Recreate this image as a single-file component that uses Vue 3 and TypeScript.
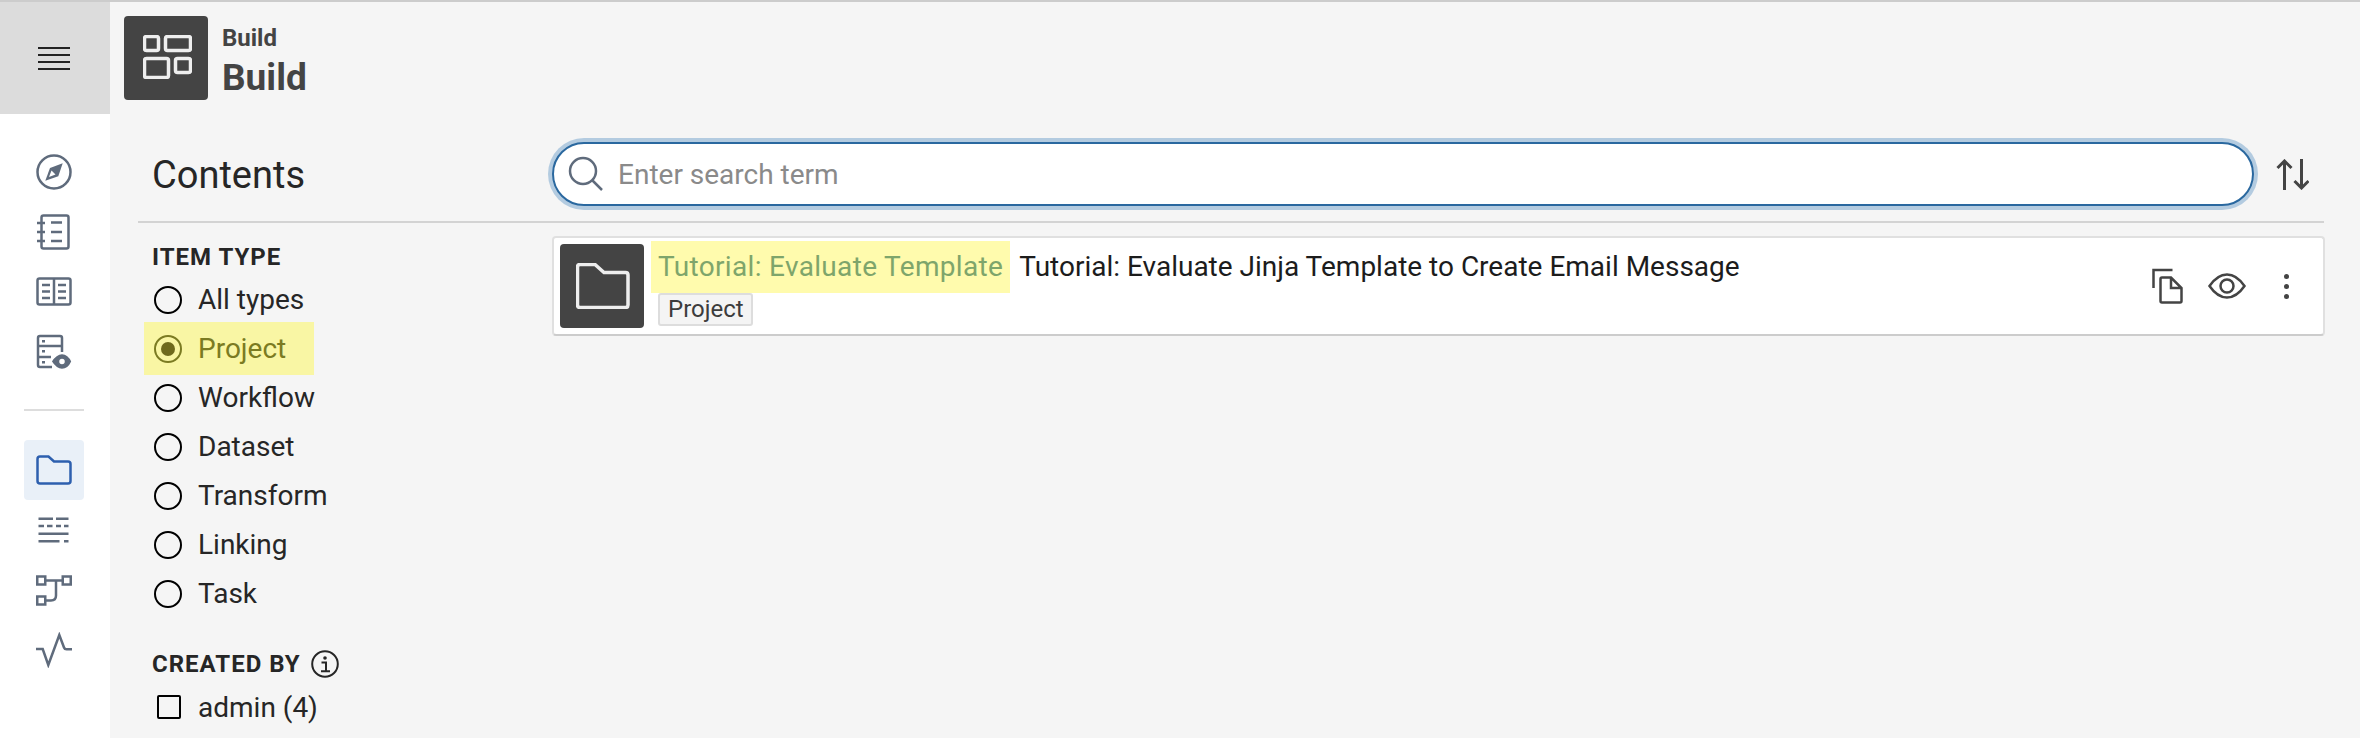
<script setup lang="ts">
const railTop = ["compass", "notebook", "book", "server"];
const types = ["All types", "Project", "Workflow", "Dataset", "Transform", "Linking", "Task"];
const selected = "Project";
</script>

<template>
  <div class="app">
    <nav class="rail">
      <button class="menu" aria-label="Menu">
        <span></span><span></span><span></span><span></span>
      </button>
      <div class="rail-group first">
        <div v-for="name in railTop" :key="name" class="rail-item">
          <svg v-if="name === 'compass'" viewBox="0 0 36 36" class="ri">
            <circle cx="18" cy="18" r="16.500" />
            <path class="needle" d="M26.700 9.300 L22.300 22.300 L9.300 26.700 L14 14 Z" />
            <path class="cut" d="M13 23 L15.500 16.500 L19.500 20.500 Z" />
          </svg>
          <svg v-else-if="name === 'notebook'" viewBox="0 0 36 36" class="ri">
            <rect x="5.500" y="1.500" width="27" height="33" rx="2" />
            <path d="M1 9h8M1 18h8M1 27h8M15 8.500h11M15 18h11M15 27h11" />
          </svg>
          <svg v-else-if="name === 'book'" viewBox="0 0 36 36" class="ri">
            <rect x="1.500" y="4.500" width="33" height="26" rx="2" />
            <path d="M18 4.500v26M6 11h8M6 17.500h8M6 24h8M22 11h8M22 17.500h8M22 24h8" />
          </svg>
          <svg v-else viewBox="0 0 36 36" class="ri">
            <path d="M16 33H4q-2 0-2-2V4q0-2 2-2h20q2 0 2 2v14M2 12h24M2 23h13" />
            <path class="dot" d="M6 6h3v2.500H6zM6 16h3v2.500H6zM6 27h3v2.500H6z" />
            <path class="solid" d="M15 27.500c3.500-5.500 7.500-8 11-8s7.500 2.500 10 8c-2.500 5.500-6.500 8-10 8s-7.500-2.500-11-8z" />
            <circle class="hole" cx="26" cy="27.500" r="3.500" />
          </svg>
        </div>
      </div>
      <div class="rail-sep"></div>
      <div class="rail-group">
        <div class="rail-item active">
          <svg viewBox="0 0 36 30" class="ri folder">
            <path d="M1.500 4q0-2.500 2.500-2.500h8.500L18 6.500h14q2.500 0 2.500 2.500v17q0 2.500-2.500 2.500H4q-2.500 0-2.500-2.500z" />
          </svg>
        </div>
        <div class="rail-item">
          <svg viewBox="0 0 36 36" class="ri">
            <path d="M2.500 6.700h14.500M20 6.700h12.500M2.500 14h5.500M11 14h5.500M20 14h5M28 14h4.500M2.500 21.700h30M2.500 29.300h21M28 29.300h4.500" />
          </svg>
        </div>
        <div class="rail-item">
          <svg viewBox="0 0 36 36" class="ri">
            <rect x="1.250" y="4.500" width="8" height="8" />
            <rect x="26.750" y="4.500" width="8" height="8" />
            <rect x="1.250" y="24.500" width="8" height="8" />
            <path d="M9.250 8.500h17.500M20 8.500v15q0 5-5 5H9.250" />
          </svg>
        </div>
        <div class="rail-item">
          <svg viewBox="0 0 36 36" class="ri">
            <path d="M0 17h6.700l5.600 16L23.300 3l4.700 12.500q.6 1.800 2.500 1.800H36" />
          </svg>
        </div>
      </div>
    </nav>

    <main class="main">
      <header class="head">
        <div class="logo">
          <svg viewBox="0 0 49 44" width="49" height="44">
            <rect x="1.500" y="1.500" width="14" height="14" rx="2" />
            <rect x="22.500" y="1.500" width="25" height="14" rx="2" />
            <rect x="1.500" y="23.500" width="24" height="19" rx="2" />
            <rect x="32.500" y="23.500" width="15" height="14" rx="2" />
          </svg>
        </div>
        <div class="head-text">
          <div class="crumb">Build</div>
          <div class="title">Build</div>
        </div>
      </header>

      <div class="toolbar">
        <h2 class="contents">Contents</h2>
        <div class="search">
          <svg viewBox="0 0 36 36" width="36" height="36" class="search-icon">
            <circle cx="15" cy="15" r="13" />
            <path d="M24.500 24.500L34 34" />
          </svg>
          <input placeholder="Enter search term" />
        </div>
        <svg viewBox="0 0 33 31" width="33" height="31" class="sort">
          <path d="M8.500 31V2M1.500 9l7-7 7 7M25.500 0v29M18.500 22l7 7 7-7" />
        </svg>
      </div>

      <div class="body">
        <aside class="filters">
          <div class="f-head">ITEM TYPE</div>
          <label v-for="t in types" :key="t" class="radio" :class="{ on: t === selected }">
            <span class="circle"></span>
            <span>{{ t }}</span>
          </label>
          <div class="f-head created">
            CREATED BY
            <svg viewBox="0 0 28 28" width="28" height="28" class="info">
              <circle cx="14" cy="14" r="12.800" />
              <path d="M10.500 12.500H15V21M10 21.200h9" />
              <circle class="idot" cx="14" cy="8" r="1.800" />
            </svg>
          </div>
          <label class="check">
            <span class="box"></span>
            <span>admin (4)</span>
          </label>
        </aside>

        <section class="results">
          <article class="card">
            <div class="tile">
              <svg viewBox="0 0 54 46" width="54" height="46">
                <path d="M1.500 4q0-2.500 2.500-2.500h15l9 8h21.500q2.500 0 2.500 2.500v30q0 2.500-2.500 2.500H4q-2.500 0-2.500-2.500z" />
              </svg>
            </div>
            <div class="card-text">
              <div class="card-title">
                <mark>Tutorial: Evaluate Template</mark>
                <span>Tutorial: Evaluate Jinja Template to Create Email Message</span>
              </div>
              <span class="tag">Project</span>
            </div>
            <div class="actions">
              <svg viewBox="0 0 32 36" width="32" height="36" class="act">
                <path d="M1.500 20V2h19" />
                <path d="M8.500 11q0-1.500 1.500-1.500h9L29.500 20v13q0 1.500-1.500 1.500H10q-1.500 0-1.500-1.500zM19 9.500V20H29.500" />
              </svg>
              <svg viewBox="0 0 38 26" width="38" height="26" class="act">
                <path d="M1.500 13C7 5 12.500 1.500 19 1.500S31 5 36.500 13C31 21 25.500 24.500 19 24.500S7 21 1.500 13z" />
                <circle cx="19" cy="13" r="6.500" />
              </svg>
              <div class="dots"><i></i><i></i><i></i></div>
            </div>
          </article>
        </section>
      </div>
    </main>
  </div>
</template>

<style scoped>
.app { display: flex; height: 736px; border-top: 2px solid #ccc; overflow: hidden; font-family: Roboto, "Liberation Sans", sans-serif; color: #262626; background: #f5f5f5; }

.rail { width: 110px; flex: none; background: #fff; display: flex; flex-direction: column; align-items: center; }
.menu { width: 110px; height: 112px; flex: none; border: 0; background: #dcdcdc; display: flex; flex-direction: column; align-items: center; justify-content: center; gap: 5px; padding: 0 2px 0 0; }
.menu span { display: block; width: 32px; height: 2px; background: #222; }
.rail-group { display: flex; flex-direction: column; align-items: center; margin-right: 2px; }
.rail-group.first { margin-top: 28px; }
.rail-item { width: 60px; height: 60px; display: flex; align-items: center; justify-content: center; border-radius: 4px; }
.rail-item.active { background: #e9f0f8; }
.rail-sep { width: 60px; height: 2px; background: #ddd; margin: 27px 2px 29px 0; }
.ri { width: 36px; height: 36px; fill: none; stroke: #5f6b7c; stroke-width: 2.500; }
.ri .solid { fill: #5f6b7c; stroke: #fff; stroke-width: 1.500; }
.ri .needle { fill: #5f6b7c; stroke: none; }
.ri .cut { fill: #fff; stroke: none; }
.ri .dot { fill: #5f6b7c; stroke: none; }
.ri .hole { fill: #fff; stroke: #5f6b7c; stroke-width: 1.500; }
.ri.folder { height: 30px; stroke: #2d5fae; }

.main { flex: 1; min-width: 0; display: flex; flex-direction: column; }
.head { display: flex; align-items: center; gap: 14px; padding: 14px 0 0 14px; height: 98px; box-sizing: border-box; flex: none; }
.logo { width: 84px; height: 84px; flex: none; background: #444; border-radius: 4px; display: flex; align-items: center; justify-content: center; }
.logo svg { fill: none; stroke: #eee; stroke-width: 3.500; margin: -2px 0 0 3px; }
.head-text { color: #444; font-weight: 700; margin-top: 10px; }
.crumb { font-size: 24px; line-height: 30px; font-weight: 700; }
.title { font-size: 37px; line-height: 50px; }

.toolbar { margin-left: 28px; margin-right: 36px; height: 123px; box-sizing: border-box; padding-top: 42px; padding-bottom: 15px; border-bottom: 2px solid #d3d3d3; display: flex; align-items: center; flex: none; }
.contents { margin: 2px 0 0; width: 414px; padding-left: 14px; box-sizing: border-box; font-size: 38px; font-weight: 400; flex: none; }
.search { flex: 1; height: 64px; box-sizing: border-box; border: 2px solid #2a689f; border-radius: 32px; background: #fff; box-shadow: 0 0 0 4px #b3cbe0; display: flex; align-items: center; padding-left: 14px; gap: 12px; }
.search-icon { fill: none; stroke: #5f6b7c; stroke-width: 2.500; flex: none; }
.search input { flex: 1; border: 0; outline: 0; background: none; font: inherit; font-size: 28px; color: #262626; min-width: 0; }
.search input::placeholder { color: #8a8a8a; opacity: 1; }
.sort { fill: none; stroke: #444; stroke-width: 3; flex: none; margin-left: 22px; margin-right: 15px; }

.body { flex: 1; display: flex; margin-left: 28px; margin-right: 35px; }
.filters { width: 414px; flex: none; padding-top: 20px; font-size: 28px; box-sizing: border-box; }
.f-head { padding-left: 14px; font-size: 24px; line-height: 28px; font-weight: 700; letter-spacing: 1px; display: flex; align-items: center; }
.radio { display: flex; align-items: center; width: 170px; height: 49px; padding-left: 10px; box-sizing: border-box; gap: 16px; margin-left: 6px; color: #262626; }
.radio:first-of-type { margin-top: 4px; }
.radio.on { background: #f9f6a4; color: #7b7b22; height: 53px; margin: -2px 0 -2px 6px; }
.circle { width: 28px; height: 28px; box-sizing: border-box; border: 2px solid #000; border-radius: 50%; flex: none; position: relative; }
.on .circle { border-color: #7b7b22; }
.on .circle::after { content: ""; position: absolute; inset: 5px; border-radius: 50%; background: #6f6a1d; }
.f-head.created { margin-top: 32px; gap: 10px; }
.info { fill: none; stroke: #262626; stroke-width: 2; }
.info .idot { fill: #262626; stroke: none; }
.check { display: flex; align-items: center; height: 44px; padding-left: 19px; margin-top: 7px; gap: 17px; color: #262626; }
.box { width: 24px; height: 24px; box-sizing: border-box; border: 2px solid #000; border-radius: 2px; flex: none; }

.results { flex: 1; min-width: 0; padding-top: 13px; }
.card { height: 100px; box-sizing: border-box; background: #fff; border: 2px solid #e0e0e0; border-bottom-color: #ccc; border-radius: 4px; display: flex; align-items: center; padding: 0 6px; gap: 7px; }
.tile { width: 84px; height: 84px; flex: none; background: #444; border-radius: 4px; display: flex; align-items: center; justify-content: center; }
.tile svg { fill: none; stroke: #eee; stroke-width: 3.500; margin-left: 2px; }
.card-text { flex: 1; min-width: 0; display: flex; flex-direction: column; align-items: flex-start; }
.card-title { display: flex; align-items: center; font-size: 28px; height: 52px; color: #1c1c1c; margin-top: -6px; margin-bottom: 0; }
.card-title mark { background: #fffbad; color: #7ea56b; padding: 0 7px; height: 52px; line-height: 52px; margin-right: 9px; letter-spacing: 0.33px; }
.tag { font-size: 24px; line-height: 29px; height: 33px; box-sizing: border-box; border: 2px solid #ddd; border-radius: 3px; background: #f4f4f4; padding: 0 7px 0 8px; margin-left: 7px; color: #3c3c3c; }
.actions { display: flex; align-items: center; gap: 24px; padding-right: 28px; flex: none; }
.act { fill: none; stroke: #444; stroke-width: 2.500; }
.dots { display: flex; flex-direction: column; gap: 5px; margin-left: 14px; }
.dots i { display: block; width: 5px; height: 5px; border-radius: 50%; background: #444; }
</style>

<style>
body { margin: 0; background: #f5f5f5; }
</style>
